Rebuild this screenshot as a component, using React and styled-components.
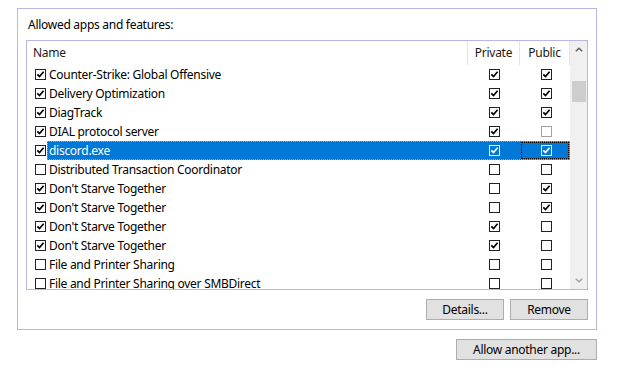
import React from 'react'
import styled, { createGlobalStyle } from 'styled-components'

const Global = createGlobalStyle`
  *{box-sizing:border-box}
  html,body{margin:0;background:#fff}
  body{font-family:"Noto Sans", "Segoe UI", Arial, sans-serif;font-size:12px;letter-spacing:-0.28px;color:#000}
`

const Page = styled.div`
  padding:8px 0 0 17px;
  width:597px;
`

const Group = styled.fieldset`
  margin:0; padding:0 8px 9px;
  width:580px; height:322px;
  border:1px solid #b7b7e2;
  display:flex; flex-direction:column;
`

const Title = styled.div`
  padding:8px 0 0 2px;
  height:31px; line-height:16px;
`

const List = styled.div`
  height:250px;
  border:1px solid #b7b7e2;
  display:flex;
  overflow:hidden;
`

const Content = styled.div`
  flex:1; min-width:0;
  display:flex; flex-direction:column;
`

const Header = styled.div`
  height:24px; flex:none;
  display:grid; grid-template-columns:1fr 52px 50px;
  align-items:stretch;
`

const HeadCell = styled.div`
  display:flex; align-items:center;
  justify-content:${p => p.$left ? 'flex-start' : 'center'};
  padding-left:${p => p.$left ? '6px' : '0'};
  border-right:1px solid #e5e5e5;
  color:#1a1a1a;
  padding-bottom:1px;
`

const Row = styled.div`
  height:19px; flex:none;
  display:flex; align-items:stretch;
`

const Lead = styled.div`
  width:20px; flex:none;
  display:flex; align-items:center; padding-left:8px;
`

const Line = styled.div`
  flex:1; min-width:0;
  display:grid; grid-template-columns:1fr 52px 50px;
  background:${p => p.$sel ? '#0078d7' : 'transparent'};
  color:${p => p.$sel ? '#fff' : '#000'};
  outline:${p => p.$sel ? '1px dotted #f7913b' : 'none'};
  outline-offset:-1px;
`

const Label = styled.div`
  display:flex; align-items:center;
  padding-left:2px; white-space:nowrap;
`

const Cell = styled.div`
  display:flex; align-items:center; justify-content:center;
  padding-left:${p => p.$shift || 0}px;
  outline:${p => p.$focus ? '1px dotted #000' : 'none'};
  outline-offset:-2px;
`

const Box = styled.span`
  width:11px; height:11px; flex:none;
  border:1px solid ${p => p.$inv ? '#fff' : p.$off ? '#a3a3a3' : '#222'};
  background:${p => p.$inv ? 'transparent' : '#fff'};
  display:flex; align-items:center; justify-content:center;
  svg{display:block}
`

const Scroll = styled.div`
  width:17px; flex:none;
  background:#f0f0f0;
  display:flex; flex-direction:column; align-items:center;
`

const Arrow = styled.div`
  height:17px; width:17px;
  display:flex; align-items:center; justify-content:center;
  margin-top:${p => p.$down ? 'auto' : '0'};
`

const Thumb = styled.div`
  width:14px; height:21px;
  margin-top:23px;
  background:#cdcdcd;
`

const Buttons = styled.div`
  display:flex; justify-content:flex-end; gap:6px;
  margin-top:9px;
`

const Button = styled.button`
  width:${p => p.$w}px; height:21px;
  background:#e1e1e1; border:1px solid #adadad;
  font:inherit; letter-spacing:inherit; color:#000; padding:0;
  display:flex; align-items:center; justify-content:center;
`

const Bottom = styled.div`
  display:flex; justify-content:flex-end;
  margin-top:9px;
`

function Check({ on, inv, off }) {
  return (
    <Box $inv={inv} $off={off}>
      {on && (
        <svg width="9" height="9" viewBox="0 0 9 9">
          <path d="M1.3 4.3 L3.5 6.6 L7.6 1.8" fill="none" stroke={inv ? '#fff' : '#000'} strokeWidth="1.7" />
        </svg>
      )}
    </Box>
  )
}

const rows = [
  { name: 'Counter-Strike: Global Offensive', on: true, priv: true, pub: true },
  { name: 'Delivery Optimization', on: true, priv: true, pub: true },
  { name: 'DiagTrack', on: true, priv: true, pub: true },
  { name: 'DIAL protocol server', on: true, priv: true, pub: false, pubOff: true },
  { name: 'discord.exe', on: true, priv: true, pub: true, sel: true },
  { name: 'Distributed Transaction Coordinator', on: false, priv: false, pub: false },
  { name: "Don't Starve Together", on: true, priv: false, pub: true },
  { name: "Don't Starve Together", on: true, priv: false, pub: true },
  { name: "Don't Starve Together", on: true, priv: true, pub: false },
  { name: "Don't Starve Together", on: true, priv: true, pub: false },
  { name: 'File and Printer Sharing', on: false, priv: false, pub: false },
  { name: 'File and Printer Sharing over SMBDirect', on: false, priv: false, pub: false },
]

export default function App() {
  return (
    <Page>
      <Global />
      <Group>
        <Title>Allowed apps and features:</Title>
        <List>
          <Content>
            <Header>
              <HeadCell $left>Name</HeadCell>
              <HeadCell>Private</HeadCell>
              <HeadCell>Public</HeadCell>
            </Header>
            {rows.map((r, i) => (
              <Row key={i}>
                <Lead><Check on={r.on} /></Lead>
                <Line $sel={r.sel}>
                  <Label>{r.name}</Label>
                  <Cell><Check on={r.priv} inv={r.sel} /></Cell>
                  <Cell $shift={3} $focus={r.sel}><Check on={r.pub} inv={r.sel} off={r.pubOff} /></Cell>
                </Line>
              </Row>
            ))}
          </Content>
          <Scroll>
            <Arrow>
              <svg width="8" height="5" viewBox="0 0 8 5"><path d="M0.8 4.2 L4 1.2 L7.2 4.2" fill="none" stroke="#606060" strokeWidth="1.5" /></svg>
            </Arrow>
            <Thumb />
            <Arrow $down>
              <svg width="8" height="5" viewBox="0 0 8 5"><path d="M0.8 0.8 L4 3.8 L7.2 0.8" fill="none" stroke="#a3a3a3" strokeWidth="1.5" /></svg>
            </Arrow>
          </Scroll>
        </List>
        <Buttons>
          <Button $w={78}>Details...</Button>
          <Button $w={78}>Remove</Button>
        </Buttons>
      </Group>
      <Bottom>
        <Button $w={141}>Allow another app...</Button>
      </Bottom>
    </Page>
  )
}
